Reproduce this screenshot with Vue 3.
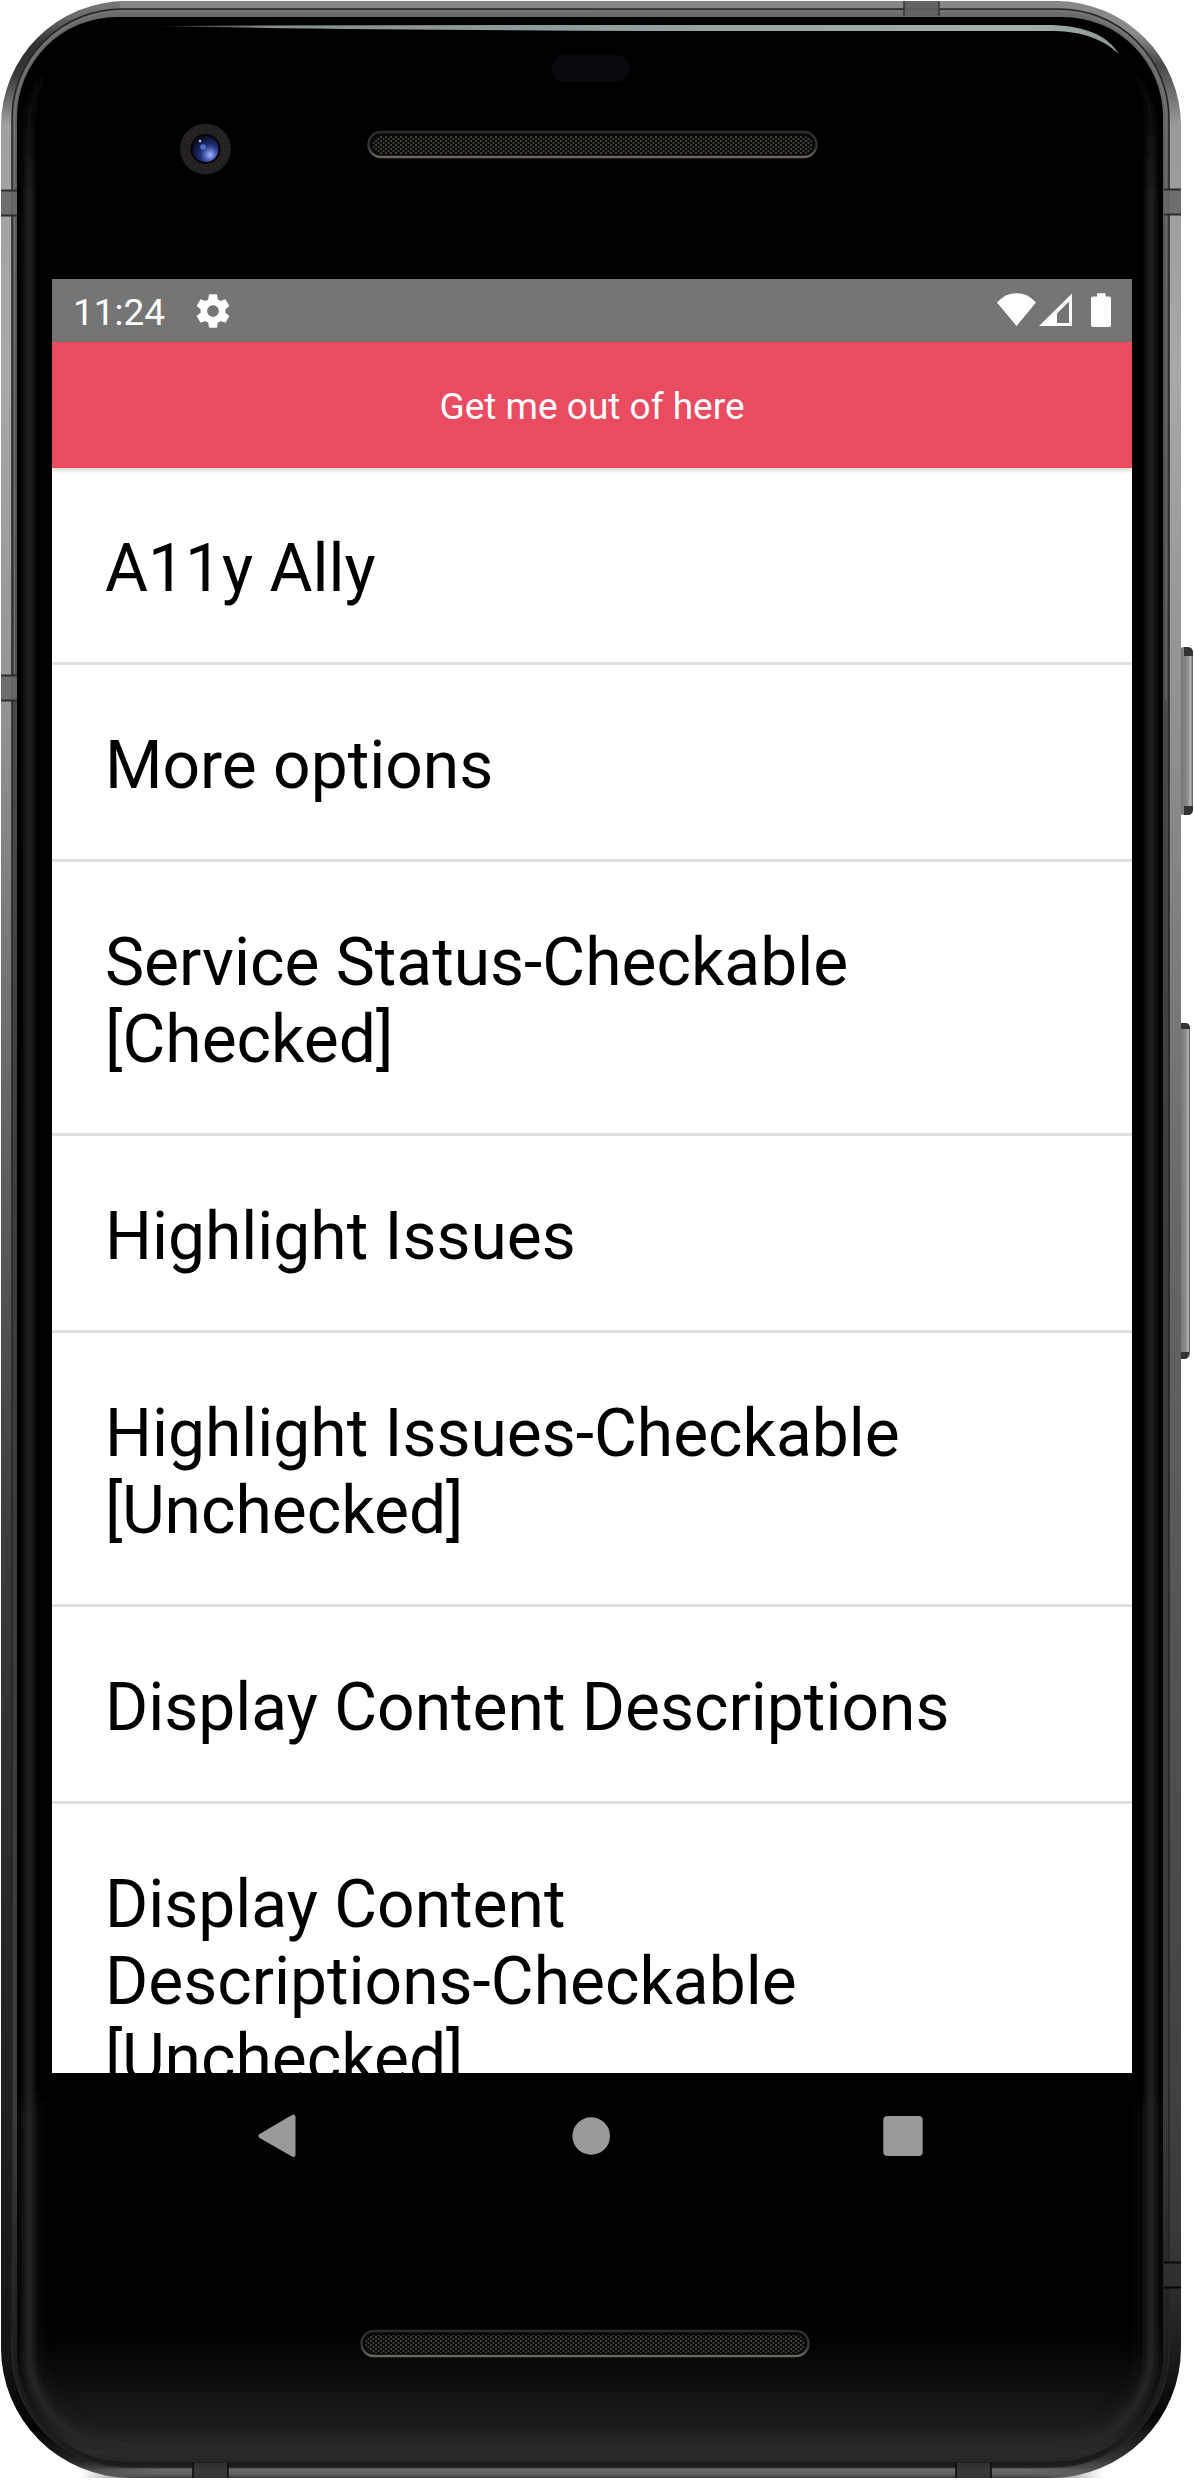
<script setup>
const rows = [
  'A11y Ally',
  'More options',
  'Service Status-Checkable\n[Checked]',
  'Highlight Issues',
  'Highlight Issues-Checkable\n[Unchecked]',
  'Display Content Descriptions',
  'Display Content\nDescriptions-Checkable\n[Unchecked]',
]

// Antenna bands set into the metal frame
const sideBands = [
  { x: 1, y: 190 },
  { x: 1, y: 675 },
  { x: 1164, y: 189 },
  { x: 1164, y: 2262, dark: true },
]
const edgeBands = [
  { x: 904, y: 1 },
  { x: 193, y: 2463, dark: true },
  { x: 956, y: 2463, dark: true },
]
</script>

<template>
  <div class="device">
    <svg class="shell" width="1194" height="2480" viewBox="0 0 1194 2480" aria-hidden="true">
      <defs>
        <linearGradient id="metal" gradientUnits="userSpaceOnUse" x1="0" y1="0" x2="0" y2="2478">
          <stop offset="0" stop-color="#777a78" />
          <stop offset=".006" stop-color="#6c6e6d" />
          <stop offset=".018" stop-color="#303030" />
          <stop offset=".03" stop-color="#383838" />
          <stop offset=".05" stop-color="#a0a0a0" />
          <stop offset=".15" stop-color="#a8a8a8" />
          <stop offset=".29" stop-color="#929292" />
          <stop offset=".45" stop-color="#646464" />
          <stop offset=".62" stop-color="#3c3c3c" />
          <stop offset=".8" stop-color="#242424" />
          <stop offset=".95" stop-color="#151515" />
          <stop offset=".98" stop-color="#030303" />
          <stop offset=".993" stop-color="#222" />
          <stop offset="1" stop-color="#666" />
        </linearGradient>
        <linearGradient id="metalRight" gradientUnits="userSpaceOnUse" x1="0" y1="0" x2="0" y2="2478">
          <stop offset="0" stop-color="#858787" />
          <stop offset=".014" stop-color="#8b8b8b" />
          <stop offset=".026" stop-color="#484848" />
          <stop offset=".05" stop-color="#999" />
          <stop offset=".15" stop-color="#a8a8a8" />
          <stop offset=".29" stop-color="#909090" />
          <stop offset=".5" stop-color="#666" />
          <stop offset=".7" stop-color="#505050" />
          <stop offset=".9" stop-color="#3a3a3a" />
          <stop offset=".95" stop-color="#1c1c1c" />
          <stop offset=".975" stop-color="#050505" />
          <stop offset=".992" stop-color="#333" />
          <stop offset="1" stop-color="#6c6c6c" />
        </linearGradient>
        <linearGradient id="rim" x1="0" y1="0" x2="0" y2="1">
          <stop offset="0" stop-color="#6c6c6c" />
          <stop offset=".1" stop-color="#555" />
          <stop offset=".5" stop-color="#3c3c3c" />
          <stop offset=".85" stop-color="#3c3c3c" />
          <stop offset=".96" stop-color="#1c1c1c" />
          <stop offset="1" stop-color="#1c1c1c" />
        </linearGradient>
        <linearGradient id="topShine" gradientUnits="userSpaceOnUse" x1="155" y1="0" x2="1120" y2="0">
          <stop offset="0" stop-color="#8c9896" stop-opacity=".2" />
          <stop offset=".12" stop-color="#84908f" />
          <stop offset=".9" stop-color="#a4b0ae" />
          <stop offset="1" stop-color="#8c9896" />
        </linearGradient>
        <linearGradient id="chin" x1="0" y1="0" x2="0" y2="1">
          <stop offset="0" stop-color="#000" />
          <stop offset=".2" stop-color="#020202" />
          <stop offset=".5" stop-color="#101010" />
          <stop offset=".75" stop-color="#1c1c1c" />
          <stop offset=".92" stop-color="#2d2d2d" />
          <stop offset="1" stop-color="#222" />
        </linearGradient>
        <linearGradient id="edgeGlow" gradientUnits="userSpaceOnUse" x1="0" y1="0" x2="0" y2="2478">
          <stop offset="0" stop-color="#262626" stop-opacity="0" />
          <stop offset=".025" stop-color="#262626" stop-opacity="0" />
          <stop offset=".08" stop-color="#262626" />
          <stop offset="1" stop-color="#262626" />
        </linearGradient>
        <linearGradient id="bottomMetal" x1="0" y1="0" x2="0" y2="1">
          <stop offset="0" stop-color="#303030" />
          <stop offset=".2" stop-color="#6a6a6a" />
          <stop offset=".65" stop-color="#606060" />
          <stop offset="1" stop-color="#3a3a3a" />
        </linearGradient>
        <linearGradient id="fade" x1="0" y1="0" x2="1" y2="0">
          <stop offset="0" stop-color="#fff" stop-opacity="0" />
          <stop offset=".08" stop-color="#fff" />
          <stop offset=".92" stop-color="#fff" />
          <stop offset="1" stop-color="#fff" stop-opacity="0" />
        </linearGradient>
        <mask id="bottomFade"><rect x="80" y="2460" width="1024" height="20" fill="url(#fade)" /></mask>
        <linearGradient id="button" x1="0" y1="0" x2="1" y2="0">
          <stop offset="0" stop-color="#555" />
          <stop offset=".3" stop-color="#7c7c7c" />
          <stop offset=".65" stop-color="#8c8c8c" />
          <stop offset=".85" stop-color="#b4b8b6" />
          <stop offset="1" stop-color="#555" />
        </linearGradient>
        <radialGradient id="lens" cx=".68" cy=".72" r=".75">
          <stop offset="0" stop-color="#a9b8f4" />
          <stop offset=".22" stop-color="#5d74cb" />
          <stop offset=".5" stop-color="#202e78" />
          <stop offset="1" stop-color="#080b22" />
        </radialGradient>
        <linearGradient id="slotRing" x1="0" y1="0" x2="0" y2="1">
          <stop offset="0" stop-color="#2c2c2c" />
          <stop offset=".6" stop-color="#333" />
          <stop offset="1" stop-color="#6b6661" />
        </linearGradient>
        <pattern id="mesh" width="5" height="4" patternUnits="userSpaceOnUse">
          <rect width="5" height="4" fill="#0a0a09" />
          <rect x="0" y="0" width="2" height="2" fill="#403c36" />
          <rect x="2.5" y="2" width="2" height="2" fill="#403c36" />
        </pattern>
        <clipPath id="glassClip">
          <path d="M117 17H1063A100 100 0 0 1 1163 117V2352A110 110 0 0 1 1053 2462H127A110 110 0 0 1 17 2352V117A100 100 0 0 1 117 17Z" />
        </clipPath>
        <filter id="soft" x="-10%" y="-10%" width="120%" height="120%"><feGaussianBlur stdDeviation="9" /></filter>
        <filter id="softEdge" x="-5%" y="-5%" width="110%" height="110%"><feGaussianBlur stdDeviation="3" /></filter>
      </defs>

      <rect x="1178" y="647" width="15" height="168" rx="6" fill="url(#button)" />
      <path d="M1184 647h4q5 0 5 6v3h-9zM1184 806h9v3q0 6-5 6h-4z" fill="#333" />
      <rect x="1178" y="1023" width="12" height="336" rx="5" fill="url(#button)" />
      <path d="M1181 1023h5q4 0 4 6h-9zM1181 1352h8q0 7-4 7h-4z" fill="#333" />

      <path d="M590 1H126A125 125 0 0 0 1 126V2348A130 130 0 0 0 131 2478H590Z" fill="url(#metal)" />
      <path d="M589 1H1056A125 125 0 0 1 1181 126V2348A130 130 0 0 1 1051 2478H589Z" fill="url(#metalRight)" />
      <rect x="120" y="1" width="940" height="7" fill="#858887" />
      <rect x="80" y="2467" width="1024" height="11" fill="url(#bottomMetal)" mask="url(#bottomFade)" />

      <path d="M122 9H1058A110 110 0 0 1 1169 120V2352A115 115 0 0 1 1054 2467H127A115 115 0 0 1 12 2352V120A110 110 0 0 1 122 9Z" fill="url(#rim)" stroke="#252525" stroke-width="1.5" />
      <path d="M122 11.5H1058A107 107 0 0 1 1166 120V700M14.500 700V120A107 107 0 0 1 122 11.500" fill="none" stroke="#858585" stroke-width="1.2" opacity=".6" />

      <g v-for="(b, i) in sideBands" :key="'s' + i">
        <rect :x="b.x" :y="b.y" width="17" height="25" :fill="b.dark ? '#303030' : '#686868'" opacity=".9" />
        <path :d="`M${b.x} ${b.y + .5}h17m0 25h-17`" :stroke="b.dark ? '#080808' : '#2c2c2c'" stroke-width="2" />
      </g>
      <g v-for="(b, i) in edgeBands" :key="'e' + i">
        <rect :x="b.x" :y="b.y" width="35" height="15" :fill="b.dark ? '#333' : '#5d605f'" opacity=".9" />
        <path :d="`M${b.x} ${b.y}v15m35 0v-15`" :stroke="b.dark ? '#0a0a0a' : '#333'" stroke-width="1.5" />
      </g>

      <g clip-path="url(#glassClip)">
        <rect x="10" y="10" width="1160" height="2460" fill="#000" />
        <rect x="10" y="2310" width="1160" height="155" fill="url(#chin)" />
        <path d="M29 2100V2352A98 98 0 0 0 127 2450H1053A98 98 0 0 0 1151 2352V2100" fill="none" stroke="#2c2c2c" stroke-width="15" opacity=".45" filter="url(#soft)" />
        <path d="M127 29A98 98 0 0 0 29 127V2352A98 98 0 0 0 127 2450H1053A98 98 0 0 0 1151 2352V127A98 98 0 0 0 1053 29" fill="none" stroke="url(#edgeGlow)" stroke-width="8" filter="url(#softEdge)" />
      </g>
      <path d="M155 26Q400 24.500 650 25H1045C1085 25 1107 35 1119 54C1102 39 1084 31 1048 31H650Q350 30 155 26Z" fill="url(#topShine)" />

      <circle cx="205.500" cy="149" r="25.500" fill="#211e1e" />
      <circle cx="205.500" cy="149" r="20" fill="none" stroke="#302c2b" stroke-width="8" stroke-dasharray="2 2" opacity=".5" />
      <circle cx="205.500" cy="149" r="15" fill="#050508" />
      <circle cx="205.500" cy="149" r="13" fill="url(#lens)" />
      <circle cx="203" cy="147" r="2.800" fill="#5f82d8" opacity=".8" />
      <circle cx="200" cy="141" r="1.200" fill="#c3cdf0" />

      <rect x="551.500" y="55" width="78" height="27" rx="13.500" fill="#08090d" />

      <rect x="368.500" y="132" width="448" height="25" rx="12.500" fill="#080808" stroke="url(#slotRing)" stroke-width="2.500" />
      <rect x="372" y="136" width="441" height="18" rx="9" fill="url(#mesh)" />
      <rect x="361.500" y="2331" width="447" height="25" rx="12.500" fill="#080808" stroke="url(#slotRing)" stroke-width="2.500" />
      <rect x="365" y="2335" width="440" height="18" rx="9" fill="url(#mesh)" />
    </svg>

    <div class="front">
      <main class="screen">
        <header class="status">
          <span class="time">11:24</span>
          <svg class="gear" width="40" height="40" viewBox="0 0 24 24" fill="#fff">
            <path d="M19.430 12.980c.04-.32.07-.64.07-.98s-.03-.66-.07-.98l2.110-1.650c.19-.15.24-.42.12-.64l-2-3.460c-.12-.22-.39-.3-.61-.22l-2.490 1c-.52-.4-1.080-.73-1.690-.98l-.38-2.650C14.460 2.180 14.250 2 14 2h-4c-.25 0-.46.18-.49.42l-.38 2.650c-.61.25-1.170.59-1.690.98l-2.490-1c-.23-.09-.49 0-.61.22l-2 3.460c-.13.22-.07.49.12.64l2.110 1.650c-.04.32-.07.65-.07.98s.03.66.07.98l-2.110 1.650c-.19.15-.24.42-.12.64l2 3.460c.12.22.39.3.61.22l2.490-1c.52.4 1.080.73 1.690.98l.38 2.650c.03.24.24.42.49.42h4c.25 0 .46-.18.49-.42l.38-2.650c.61-.25 1.170-.59 1.690-.98l2.490 1c.23.09.49 0 .61-.22l2-3.460c.12-.22.07-.49-.12-.64l-2.110-1.650zM12 15.500c-1.930 0-3.500-1.570-3.500-3.500s1.570-3.500 3.500-3.500 3.500 1.570 3.500 3.500-1.570 3.500-3.500 3.500z" />
          </svg>
          <svg class="signals" width="115" height="35" viewBox="0 0 115 35" fill="#fff">
            <path d="M0 9.500Q8 .3 19.500 .3T39 9.500L19.500 33Z" />
            <path fill-rule="evenodd" d="M42 33L75 .5V33ZM60 30H72V8.500L60 20.500Z" />
            <path d="M100 .3h8.500V3.500H112q2 0 2 2V32q0 2-2 2H96q-2 0-2-2V5.500q0-2 2-2h4Z" />
          </svg>
        </header>
        <button class="exit" type="button">Get me out of here</button>
        <ul class="list">
          <li v-for="row in rows" :key="row" class="row">{{ row }}</li>
        </ul>
      </main>
      <nav class="nav">
        <svg width="38" height="44" viewBox="0 0 38 44" fill="#999"><path d="M1.200 20.300L33.500 1.300Q37.500 -.5 37.500 3V41Q37.500 44 33.500 42.200L1.200 23.700Q-.5 22 1.200 20.300Z" /></svg>
        <svg width="40" height="40" viewBox="0 0 40 40" fill="#999"><circle cx="21.200" cy="20" r="18.800" /></svg>
        <svg width="40" height="40" viewBox="0 0 40 40" fill="#999"><rect x=".3" y="0" width="39.400" height="40" rx="4" /></svg>
      </nav>
    </div>
  </div>
</template>

<style>
body {
  margin: 0;
  background: #fff;
}
</style>

<style scoped>
.device {
  display: grid;
  width: 1194px;
  height: 2480px;
  overflow: hidden;
  font-family: Roboto, "Liberation Sans", sans-serif;
}
.shell,
.front {
  grid-area: 1 / 1;
}
.shell {
  display: block;
}
.front {
  z-index: 1;
  box-sizing: border-box;
  padding: 279px 62px 0 52px;
}
.screen {
  display: flex;
  flex-direction: column;
  height: 1794px;
  overflow: hidden;
  background: #fff;
}
.status {
  display: flex;
  flex: none;
  align-items: center;
  box-sizing: border-box;
  height: 63px;
  padding: 0 20px 0 21px;
  background: #757575;
  color: #fff;
}
.time {
  padding-top: 3px;
  font-size: 37px;
  line-height: 43px;
}
.gear {
  margin-left: 28px;
}
.signals {
  margin-left: auto;
}
.exit {
  flex: none;
  height: 126px;
  padding: 3px 0 0;
  border: 0;
  background: #e94b61;
  box-shadow: 0 2px 5px rgba(0, 0, 0, 0.2);
  color: #fff;
  font: 400 37px/43px Roboto, "Liberation Sans", sans-serif;
}
.list {
  margin: 0;
  padding: 0;
  list-style: none;
}
.row {
  padding: 62px 53px 55px;
  border-bottom: 3px solid #e0e0e0;
  color: #000;
  font-size: 65.9px;
  line-height: 77px;
  white-space: pre-line;
}
.nav {
  display: flex;
  align-items: center;
  justify-content: space-between;
  height: 126px;
  padding: 0 209px 0 206px;
}
</style>
